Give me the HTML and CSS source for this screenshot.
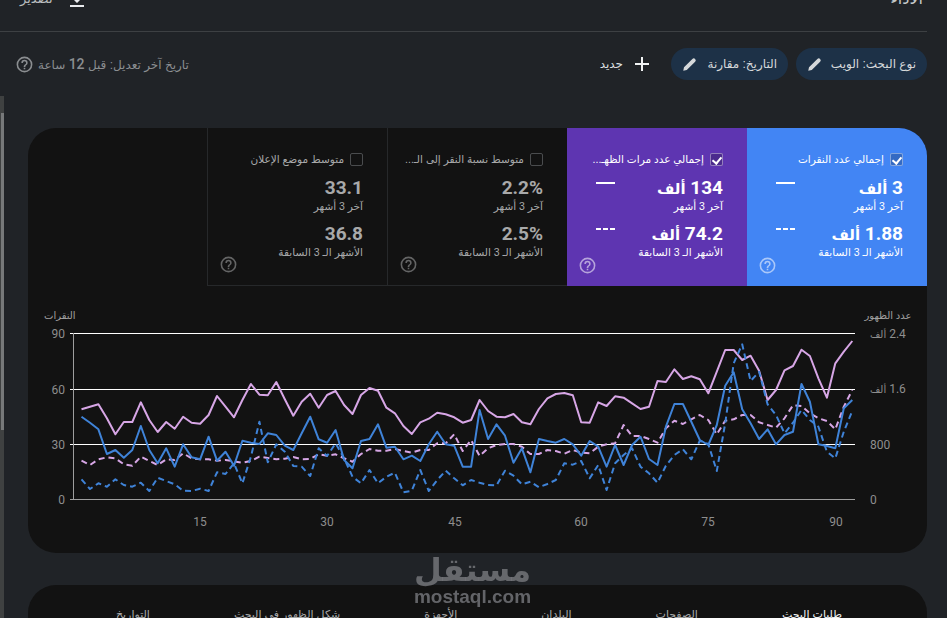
FILE: index.html
```html
<!DOCTYPE html>
<html lang="ar" dir="rtl">
<head>
    <meta charset="UTF-8">
    <title>الأداء</title>
    <link rel="stylesheet" href="styles.css">
</head>
<body>

<div class="scrollbar"><div class="scrollbar-thumb"></div></div>

<div class="page">
    <header class="top-bar">
        <h1>الأداء</h1>
        <button class="export-btn">
            <svg class="icon" viewBox="0 0 24 24"><path d="M19 9h-4V3H9v6H5l7 7 7-7zM5 18v2h14v-2H5z"/></svg>
            <span>تصدير</span>
        </button>
    </header>

    <div class="filter-bar">
        <div class="chip">
            <span>نوع البحث: الويب</span>
            <svg class="icon" viewBox="0 0 24 24"><use href="#pencil"/></svg>
        </div>
        <div class="chip">
            <span>التاريخ: مقارنة</span>
            <svg class="icon" viewBox="0 0 24 24"><use href="#pencil"/></svg>
        </div>
        <div class="new-filter">
            <svg class="icon plus" viewBox="0 0 24 24"><path d="M19 13h-6v6h-2v-6H5v-2h6V5h2v6h6v2z"/></svg>
            <span>جديد</span>
        </div>
        <div class="last-update">
            <span>تاريخ آخر تعديل: قبل <b>12</b> ساعة</span>
            <svg class="icon" viewBox="0 0 24 24"><use href="#help"/></svg>
        </div>
    </div>

    <section class="card chart-card">
        <div class="metrics">
            <div class="metric metric-blue">
                <div class="metric-title"><span class="check on"></span><span>إجمالي عدد النقرات</span></div>
                <div class="metric-value"><b>3 <small>ألف</small></b><i class="legend"></i></div>
                <div class="metric-label">آخر 3 أشهر</div>
                <div class="metric-value"><b>1.88 <small>ألف</small></b><i class="legend dashed"></i></div>
                <div class="metric-label">الأشهر الـ 3 السابقة</div>
                <svg class="icon help" viewBox="0 0 24 24"><use href="#help"/></svg>
            </div>
            <div class="metric metric-purple">
                <div class="metric-title"><span class="check on"></span><span>إجمالي عدد مرات الظهـ...</span></div>
                <div class="metric-value"><b>134 <small>ألف</small></b><i class="legend"></i></div>
                <div class="metric-label">آخر 3 أشهر</div>
                <div class="metric-value"><b>74.2 <small>ألف</small></b><i class="legend dashed"></i></div>
                <div class="metric-label">الأشهر الـ 3 السابقة</div>
                <svg class="icon help" viewBox="0 0 24 24"><use href="#help"/></svg>
            </div>
            <div class="metric">
                <div class="metric-title"><span class="check"></span><span>متوسط نسبة النقر إلى الـ...</span></div>
                <div class="metric-value"><b>2.2%</b></div>
                <div class="metric-label">آخر 3 أشهر</div>
                <div class="metric-value"><b>2.5%</b></div>
                <div class="metric-label">الأشهر الـ 3 السابقة</div>
                <svg class="icon help" viewBox="0 0 24 24"><use href="#help"/></svg>
            </div>
            <div class="metric">
                <div class="metric-title"><span class="check"></span><span>متوسط موضع الإعلان</span></div>
                <div class="metric-value"><b>33.1</b></div>
                <div class="metric-label">آخر 3 أشهر</div>
                <div class="metric-value"><b>36.8</b></div>
                <div class="metric-label">الأشهر الـ 3 السابقة</div>
                <svg class="icon help" viewBox="0 0 24 24"><use href="#help"/></svg>
            </div>
        </div>

        <svg class="chart" id="chart" width="899" height="250" direction="ltr">
            <g class="grid">
                <line x1="42" y1="47.5" x2="827" y2="47.5"/>
                <line x1="42" y1="103.5" x2="827" y2="103.5"/>
                <line x1="42" y1="158.5" x2="827" y2="158.5"/>
            </g>
            <g class="axis">
                <line x1="45.5" y1="47" x2="45.5" y2="214"/>
                <line x1="42" y1="213.5" x2="827" y2="213.5"/>
            </g>
            <g class="axis-title">
                <text x="16" y="33" direction="rtl" text-anchor="end">النقرات</text>
                <text x="860" y="33" direction="rtl" text-anchor="middle">عدد الظهور</text>
            </g>
            <g class="axis-label">
                <text x="37" y="52" text-anchor="end">90</text>
                <text x="37" y="108" text-anchor="end">60</text>
                <text x="37" y="163" text-anchor="end">30</text>
                <text x="37" y="218" text-anchor="end">0</text>
                <text x="842" y="52" direction="rtl" text-anchor="end">2.4 <tspan class="unit">ألف</tspan></text>
                <text x="842" y="107" direction="rtl" text-anchor="end">1.6 <tspan class="unit">ألف</tspan></text>
                <text x="842" y="163" text-anchor="start">800</text>
                <text x="842" y="218" text-anchor="start">0</text>
                <text x="172" y="240" text-anchor="middle">15</text>
                <text x="299" y="240" text-anchor="middle">30</text>
                <text x="427" y="240" text-anchor="middle">45</text>
                <text x="553" y="240" text-anchor="middle">60</text>
                <text x="680" y="240" text-anchor="middle">75</text>
                <text x="808" y="240" text-anchor="middle">90</text>
            </g>
            <g id="series"></g>
        </svg>
    </section>

    <section class="card tabs-card">
        <nav class="tabs">
            <a class="active">طلبات البحث</a>
            <a>الصفحات</a>
            <a>البلدان</a>
            <a>الأجهزة</a>
            <a>شكل الظهور في البحث</a>
            <a>التواريخ</a>
        </nav>
    </section>
</div>

<div class="watermark">
    <div class="watermark-name">مستقل</div>
    <div class="watermark-url">mostaql.com</div>
</div>

<svg class="defs" width="0" height="0">
    <symbol id="help" viewBox="0 0 24 24">
        <path d="M11 18h2v-2h-2v2zm1-16a10 10 0 1 0 0 20 10 10 0 0 0 0-20zm0 18a8 8 0 1 1 0-16 8 8 0 0 1 0 16zm0-14a4 4 0 0 0-4 4h2a2 2 0 1 1 4 0c0 2-3 1.75-3 5h2c0-2.25 3-2.5 3-5a4 4 0 0 0-4-4z"/>
    </symbol>
    <symbol id="pencil" viewBox="0 0 24 24">
        <path d="M2 22l1.2-5.6L16.6 3a2.9 2.9 0 0 1 4.4 4.4L7.6 20.8 2 22z"/>
    </symbol>
</svg>

<script src="chart.js"></script>
</body>
</html>
```
FILE: styles.css
```css
* {
    box-sizing: border-box;
}

html, body {
    height: 100%;
}

body {
    margin: 0;
    overflow: hidden;
    background-color: #202327;
    color: #e8eaed;
    font-family: "Liberation Sans", "DejaVu Sans", sans-serif;
    font-size: 11px;
}

.icon {
    display: block;
    width: 18px;
    height: 18px;
    fill: currentColor;
    flex: none;
}

.defs {
    position: absolute;
}

/* شريط التمرير */
.scrollbar {
    position: fixed;
    top: 96px;
    left: 0;
    bottom: 0;
    width: 4px;
    background-color: #3f4141;
}

.scrollbar-thumb {
    width: 3px;
    height: 317px;
    margin-top: 17px;
    background-color: #77797a;
}

.page {
    margin-top: -12px;
    padding: 0 20px 0 0;
}

/* الرأس */
.top-bar {
    display: flex;
    justify-content: space-between;
    align-items: center;
    height: 44px;
    padding: 0 4px 22px 20px;
    border-bottom: 1px solid #3d4043;
}

.top-bar h1 {
    margin: 0;
    font-size: 16px;
    font-weight: normal;
    color: #c4c7c9;
}

.export-btn {
    display: flex;
    align-items: center;
    gap: 12px;
    padding: 0;
    background: none;
    border: none;
    color: #b9bcbe;
    font: inherit;
    font-size: 13px;
}

.export-btn .icon {
    width: 24px;
    height: 24px;
    color: #e8eaed;
}

.filter-bar {
    display: flex;
    align-items: center;
    height: 32px;
    margin-top: 16px;
    gap: 8px;
}

.chip {
    display: flex;
    align-items: center;
    justify-content: space-between;
    height: 32px;
    padding: 0 11px;
    border-radius: 16px;
    background-color: #1d3147;
    color: #d5d8da;
    font-size: 12px;
}

.chip:nth-child(1) {
    width: 131px;
}

.chip:nth-child(2) {
    width: 117px;
}

.chip .icon {
    width: 15px;
    height: 15px;
}

.new-filter {
    display: flex;
    align-items: center;
    gap: 7px;
    margin-right: 9px;
    color: #dfe1e3;
    font-size: 12px;
}

.plus {
    width: 24px;
    height: 24px;
    color: #f1f3f4;
}

.last-update {
    display: flex;
    align-items: center;
    gap: 4px;
    margin-right: auto;
    margin-left: 15px;
    color: #8b8e91;
    font-size: 12px;
}

.last-update b {
    font-family: Roboto, sans-serif;
    font-size: 14px;
    font-weight: 500;
}

.last-update .icon {
    width: 19px;
    height: 19px;
}

/* البطاقات */
.card {
    margin-left: 28px;
    background-color: #121212;
    border-radius: 28px;
    overflow: hidden;
}

.chart-card {
    margin-top: 48px;
    height: 425px;
}

.metrics {
    display: flex;
    height: 158px;
}

.metric {
    position: relative;
    width: 180px;
    padding: 24px 24px 0 29px;
    color: #a8a9aa;
    border-left: 1px solid #26282a;
    border-bottom: 1px solid #26282a;
}

.metric-blue {
    background-color: #4285f4;
    color: #fff;
    border: none;
}

.metric-purple {
    background-color: #5e35b1;
    color: #fff;
    border: none;
}

.metric-title {
    display: flex;
    align-items: center;
    gap: 6px;
    height: 14px;
    margin-bottom: 11px;
    font-size: 10.5px;
    white-space: nowrap;
}

.check {
    position: relative;
    width: 13px;
    height: 13px;
    border: 1px solid #4a4c4e;
    border-radius: 2px;
    flex: none;
}

.metric-blue .check, .metric-purple .check {
    border-color: rgba(255, 255, 255, 0.4);
    background-color: rgba(0, 0, 0, 0.2);
}

.check.on::after {
    content: "";
    position: absolute;
    top: 1px;
    left: 3px;
    width: 4px;
    height: 7px;
    border: solid #fff;
    border-width: 0 2px 2px 0;
    transform: rotate(40deg);
}

.metric-value {
    display: flex;
    justify-content: space-between;
    align-items: center;
    height: 20px;
}

.metric-value b {
    font-family: Roboto, "DejaVu Sans", sans-serif;
    font-size: 19px;
    font-weight: 700;
}

.metric-value small {
    font-size: 15px;
}

.legend {
    width: 19px;
    height: 2px;
    margin-bottom: 9px;
    background-color: #fff;
}

.legend.dashed {
    background: repeating-linear-gradient(90deg, #fff 0 5px, transparent 5px 7px);
}

.metric-label {
    height: 14px;
    margin: 3px 0 9px;
    font-size: 10.5px;
    white-space: nowrap;
}

.help {
    position: absolute;
    left: 11px;
    bottom: 11px;
    width: 19px;
    height: 19px;
    opacity: 0.55;
}

.chart {
    display: block;
}

.grid line {
    stroke: #fff;
    stroke-width: 1;
}

.axis line {
    stroke: #9e9e9e;
    stroke-width: 1;
}

.axis-title text {
    fill: #a0a0a0;
    font-size: 10px;
}

.axis-label text {
    fill: #8e8e8e;
    font-family: Roboto, "DejaVu Sans", sans-serif;
    font-size: 12px;
}

.axis-label .unit {
    font-size: 10px;
}

.line {
    fill: none;
    stroke-width: 2;
    stroke-linejoin: round;
}

.line-dashed {
    stroke-dasharray: 6 4;
}

.tabs-card {
    margin-top: 32px;
    height: 80px;
}

.tabs {
    display: flex;
    gap: 84px;
    padding: 23px 85px 0 0;
    color: #a8a9aa;
    font-size: 11px;
}

.tabs a {
    white-space: nowrap;
}

.tabs .active {
    color: #f1f3f4;
}

/* العلامة المائية */
.watermark {
    position: fixed;
    left: 400px;
    top: 552px;
    width: 145px;
    text-align: center;
    color: rgba(120, 121, 126, 0.8);
    pointer-events: none;
}

.watermark-name {
    height: 35px;
    font-family: "DejaVu Sans", sans-serif;
    font-size: 32px;
    font-weight: bold;
    line-height: 36px;
}

.watermark-url {
    font-size: 19px;
    font-weight: bold;
    line-height: 20px;
    direction: ltr;
}
```
FILE: chart.js
```js
// y positions of each series, in thirds of a pixel from the top of the plot window
const pinkSolid = [328,320,313,355,403,366,366,307,360,396,366,386,350,368,371,345,288,320,352,300,252,284,286,246,298,347,305,281,323,285,273,315,342,285,264,272,323,340,378,402,367,356,338,343,352,368,360,300,333,350,352,342,367,373,327,295,282,279,286,367,368,307,318,289,293,310,327,320,243,246,208,237,229,238,280,215,150,150,180,167,212,300,270,211,198,149,168,235,293,190,155,123];
const blueSolid = [350,368,388,462,450,473,450,378,450,490,445,500,433,472,478,410,482,455,497,422,428,432,400,405,437,450,400,350,418,428,390,480,505,423,417,373,443,440,478,467,483,433,395,433,437,500,500,330,417,373,407,488,445,517,417,423,428,417,433,467,423,440,500,435,495,435,410,477,495,380,312,312,365,420,435,375,257,217,328,370,417,388,433,405,395,252,305,433,438,445,325,300];
const blueDashed = [538,567,550,560,538,555,560,548,573,533,543,553,572,573,566,573,517,522,490,550,470,365,487,433,455,498,500,528,445,468,430,475,530,550,510,550,530,518,577,572,510,573,540,512,535,556,540,548,555,556,512,527,553,545,562,552,540,490,494,483,535,495,570,490,465,445,500,520,548,497,465,448,478,422,432,513,370,190,133,243,215,313,345,400,368,330,360,380,455,475,395,332];
const pinkDashed = [482,495,478,472,475,493,497,470,483,495,478,480,460,475,478,478,482,480,484,488,483,470,474,478,476,471,478,477,463,467,463,475,485,462,447,452,452,447,453,458,450,450,430,430,403,453,420,468,445,435,432,432,440,462,462,450,453,461,450,458,460,440,433,430,375,408,408,417,428,385,362,372,358,345,360,403,362,358,345,345,367,375,383,355,316,318,340,355,363,388,320,270];

const series = document.getElementById("series");
const startX = 53.5;
const stepX = 8.47;
const offsetY = 14;

function drawLine(values, color, dashed) {
    const line = document.createElementNS("http://www.w3.org/2000/svg", "polyline");
    const points = values.map((v, i) => (startX + i * stepX).toFixed(1) + "," + (v / 3 + offsetY).toFixed(1));
    line.setAttribute("points", points.join(" "));
    line.setAttribute("stroke", color);
    line.setAttribute("class", dashed ? "line line-dashed" : "line");
    series.appendChild(line);
}

drawLine(pinkDashed, "#d7a6e6", true);
drawLine(pinkSolid, "#d7a6e6", false);
drawLine(blueDashed, "#3f83d8", true);
drawLine(blueSolid, "#3f83d8", false);
```
